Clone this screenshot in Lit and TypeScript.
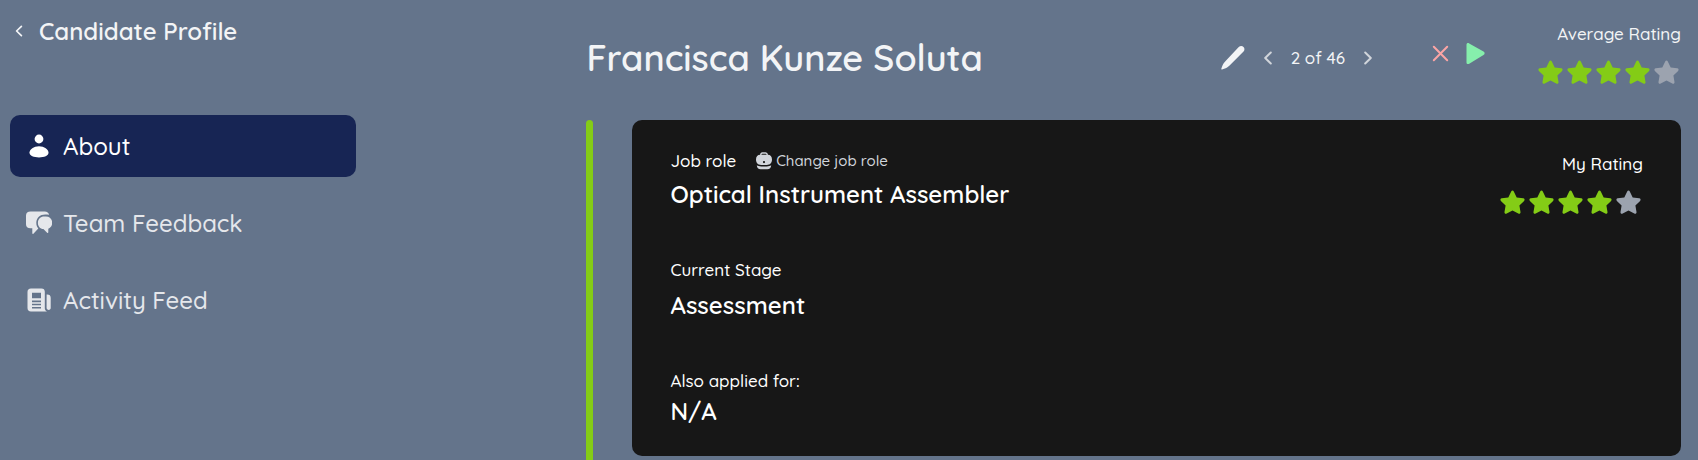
import { LitElement, html, css } from "lit";
import { customElement, property, state } from "lit/decorators.js";
import { classMap } from "lit/directives/class-map.js";

const personIcon = html`<svg class="icon" viewBox="0 0 26 26" aria-hidden="true">
  <circle cx="13" cy="6" r="4.4" />
  <path d="M13 13.2c5.2 0 9.5 3.200 9.500 6.300 0 3.300-4.300 4.900-9.500 4.900s-9.500-1.600-9.500-4.900c0-3.100 4.300-6.300 9.500-6.300z" />
</svg>`;

const chatIcon = html`<svg class="icon" viewBox="0 0 26 26" aria-hidden="true">
  <path d="M4.500 1.500h14.200c2.400 0 4.100 1.500 4.400 3.300-1.200-.3-2.600-.4-4-.4-5 0-8.800 3.500-8.800 8.300 0 2.400.7 4.300 2 5.800l-4.900 5.300c-.4.4-1.100.2-1.100-.5v-5H4.500C1.600 18.300 0 16.700 0 14.200V5.600C0 3 1.700 1.500 4.500 1.500z" />
  <path d="M18.200 6.500h1.700c3.900 0 6.300 2.700 6.300 6.300 0 3-1.500 5-3.900 5.900v3.600c0 .8-.7 1-1.200.5l-3.700-3.700c-3.300-.4-5.500-2.900-5.500-6.200 0-3.700 2.600-6.400 6.300-6.400z" />
</svg>`;

const newsIcon = html`<svg class="icon" viewBox="0 0 26 26" aria-hidden="true">
  <path fill-rule="evenodd" d="M5 1.500h10.500c2.100 0 3.300 1.200 3.300 3.300v16.400c0 1.500.9 2.700 2.300 3.300H5c-2.300 0-3.500-1.200-3.500-3.500V5c0-2.300 1.200-3.500 3.500-3.500zM6 5.800v5.500h9V5.800zM6 13.500v1.800h9v-1.800zM6 16.800v1.500h9v-1.500zM6 19.900v1.500h9v-1.500z" />
  <path d="M20.600 7.500h.6c2.300 0 3.500 1.200 3.500 3.400v9.900c0 1.300-.8 2.200-2 2.200s-2.100-.9-2.100-2.200z" />
</svg>`;

const bagIcon = html`<svg class="bag" viewBox="0 0 16 18" aria-hidden="true">
  <path class="handle" d="M4.800 4V2.800c0-1.200.6-1.800 1.600-1.800h3.200c1 0 1.600.6 1.600 1.800V4" />
  <path fill-rule="evenodd" d="M4.200 2.800h7.600c2.600 0 4.200 2 4.200 4.800 0 3.600-2 5.400-5.200 5.400H5.200C2 13 0 11.200 0 7.600c0-2.800 1.600-4.800 4.200-4.800zM8 9a1.100 1.100 0 1 0 0 2.200A1.100 1.100 0 0 0 8 9z" />
  <path d="M.8 13.300c1.100.7 2.600 1.100 4.400 1.100h5.600c1.800 0 3.300-.4 4.400-1.100-.2 2.500-1.500 3.900-3.800 3.900H4.600c-2.300 0-3.600-1.400-3.800-3.900z" />
</svg>`;

const chevron = (d: string) => html`<svg class="chevron" viewBox="0 0 8 14" aria-hidden="true"><path d=${d} /></svg>`;
const LEFT = "M6.800 1.500 1.200 7l5.600 5.500";
const RIGHT = "M1.200 1.500 6.800 7l-5.600 5.500";

@customElement("star-rating")
class StarRating extends LitElement {
  @property() label = "";
  @property({ type: Number }) value = 0;

  static styles = css`
    :host { display: flex; flex-direction: column; align-items: flex-end; gap: 12px; }
    .label { font-size: 17px; line-height: 24px; font-weight: 500; }
    .stars { display: flex; }
    .star { width: 29px; height: 29px; fill: #84cc16; }
    .empty { fill: #9ca3af; }
  `;

  render() {
    return html`
      <span class="label">${this.label}</span>
      <div class="stars" role="img" aria-label="${this.value} out of 5">
        ${[1, 2, 3, 4, 5].map((n) => html`
          <svg class=${classMap({ star: true, empty: n > this.value })} viewBox="0 0 29 29">
            <path d="M13.200 3.500c.6-1.300 2-1.300 2.600 0l2.900 5.900 6.500.9c1.400.2 1.900 1.600.9 2.600l-4.700 4.600 1.100 6.500c.2 1.400-.9 2.200-2.200 1.600l-5.800-3.100-5.800 3.100c-1.300.6-2.400-.2-2.200-1.600l1.100-6.500-4.700-4.600c-1-1-.5-2.400.9-2.600l6.500-.9z" />
          </svg>`)}
      </div>`;
  }
}

@customElement("app-root")
class AppRoot extends LitElement {
  @state() private tab = "About";

  private tabs = [
    { name: "About", icon: personIcon },
    { name: "Team Feedback", icon: chatIcon },
    { name: "Activity Feed", icon: newsIcon },
  ];

  static styles = css`
    :host {
      display: block;
      font-family: Quicksand, Lato, sans-serif;
      font-weight: 500;
      color: #fff;
      background: #64748b;
    }
    * { box-sizing: border-box; }
    button { font: inherit; color: inherit; background: none; border: 0; padding: 0; cursor: pointer; }
    h1, h2, dl, dt, dd { margin: 0; }
    .page {
      display: grid;
      grid-template-columns: 34.5% minmax(0, 1fr);
      min-height: 100vh;
      padding: 0 17px 0 10px;
    }
    .side { padding-top: 15px; }
    .back { display: flex; align-items: center; gap: 16px; padding-left: 5px; color: #f3f4f6; }
    .back a { display: flex; color: inherit; }
    .title { font-size: 24px; line-height: 32px; font-weight: 600; }
    .nav { display: flex; flex-direction: column; gap: 15px; width: 60%; margin-top: 68px; }
    .tab {
      display: flex; align-items: center; gap: 11px;
      padding: 16px; border-radius: 10px;
      font-size: 24px; line-height: 30px; color: #e5e7eb; text-align: left;
    }
    .active { background: #172554; color: #fff; }
    .icon { width: 26px; height: 26px; fill: currentColor; flex: none; }
    .chevron { width: 8px; height: 14px; fill: none; stroke: currentColor; stroke-width: 2; stroke-linecap: round; stroke-linejoin: round; }
    .back .chevron { height: 12px; }
    .main { display: flex; flex-direction: column; }
    .head { display: flex; align-items: flex-start; height: 120px; padding-top: 22px; color: #f3f4f6; }
    .name { flex: 1; font-size: 36px; line-height: 48px; font-weight: 600; padding-top: 12px; }
    .tools { display: flex; align-items: center; gap: 19px; padding-top: 23px; margin-right: 60px; font-size: 17px; line-height: 26px; }
    .tools button, .decide button { display: flex; }
    .pencil { width: 24px; height: 26px; fill: #f3f4f6; }
    .tools .chevron { color: #d1d5db; }
    .decide { display: flex; align-items: center; gap: 17px; padding-top: 20px; margin-right: 51px; }
    .reject { width: 17px; height: 17px; stroke: #fca5a5; stroke-width: 2; stroke-linecap: round; }
    .advance { width: 19px; height: 23px; fill: #86efac; }
    .body { display: flex; flex: 1; gap: 39px; }
    .bar { flex: none; width: 7px; background: #84cc16; border-radius: 4px 4px 0 0; }
    .card {
      display: flex; flex: 1; align-items: flex-start; justify-content: space-between;
      padding: 31px 38px 28px; margin-bottom: 4px;
      border-radius: 10px; background: #171717;
    }
    .card star-rating { padding-top: 1px; }
    dl { display: flex; flex-direction: column; gap: 50px; }
    dt { display: flex; align-items: center; gap: 20px; font-size: 17px; line-height: 20px; }
    dd { font-size: 24px; line-height: 32px; font-weight: 600; padding-top: 7px; }
    .stage { padding-top: 9px; }
    .other { padding-top: 4px; }
    .change { display: flex; align-items: center; gap: 4px; font-size: 15px; line-height: 18px; color: #d1d5db; }
    .bag { width: 16px; height: 18px; fill: currentColor; }
    .handle { fill: none; stroke: currentColor; stroke-width: 1.400; }
  `;

  render() {
    return html`
      <div class="page">
        <aside class="side">
          <div class="back">
            <a href="#candidates" aria-label="Back">${chevron(LEFT)}</a>
            <h2 class="title">Candidate Profile</h2>
          </div>
          <nav class="nav">
            ${this.tabs.map((t) => html`
              <button class=${classMap({ tab: true, active: t.name === this.tab })} @click=${() => (this.tab = t.name)}>
                ${t.icon}<span>${t.name}</span>
              </button>`)}
          </nav>
        </aside>
        <main class="main">
          <header class="head">
            <h1 class="name">Francisca Kunze Soluta</h1>
            <div class="tools">
              <button aria-label="Edit">
                <svg class="pencil" viewBox="0 0 24 26"><path d="M17.500 2.200c1.600-1.500 3.700-1.600 5-.3s1.300 3.300-.2 4.900L8.600 20.400c-1.600 1.600-3.300 2.600-5.500 3.400l-2 .7c-.7.200-1-.2-.8-.8l.7-2c.8-2.300 1.800-3.900 3.400-5.500z" /></svg>
              </button>
              <button aria-label="Previous">${chevron(LEFT)}</button>
              <span>2 of 46</span>
              <button aria-label="Next">${chevron(RIGHT)}</button>
            </div>
            <div class="decide">
              <button aria-label="Reject"><svg class="reject" viewBox="0 0 17 17"><path d="M1.800 1.800l13.400 13.400M15.200 1.800 1.800 15.200" /></svg></button>
              <button aria-label="Advance"><svg class="advance" viewBox="0 0 19 23"><path d="M.5 2.600C.5 1 2 .6 3.200 1.400l14.300 8.200c1.500.9 1.500 2.600 0 3.500L3.200 21.700C2 22.400.5 22 .5 20.400z" /></svg></button>
            </div>
            <star-rating label="Average Rating" .value=${4}></star-rating>
          </header>
          <div class="body">
            <div class="bar"></div>
            <section class="card">
              <dl>
                <div>
                  <dt>Job role <button class="change">${bagIcon}<span>Change job role</span></button></dt>
                  <dd>Optical Instrument Assembler</dd>
                </div>
                <div>
                  <dt>Current Stage</dt>
                  <dd class="stage">Assessment</dd>
                </div>
                <div>
                  <dt>Also applied for:</dt>
                  <dd class="other">N/A</dd>
                </div>
              </dl>
              <star-rating label="My Rating" .value=${4}></star-rating>
            </section>
          </div>
        </main>
      </div>`;
  }
}
